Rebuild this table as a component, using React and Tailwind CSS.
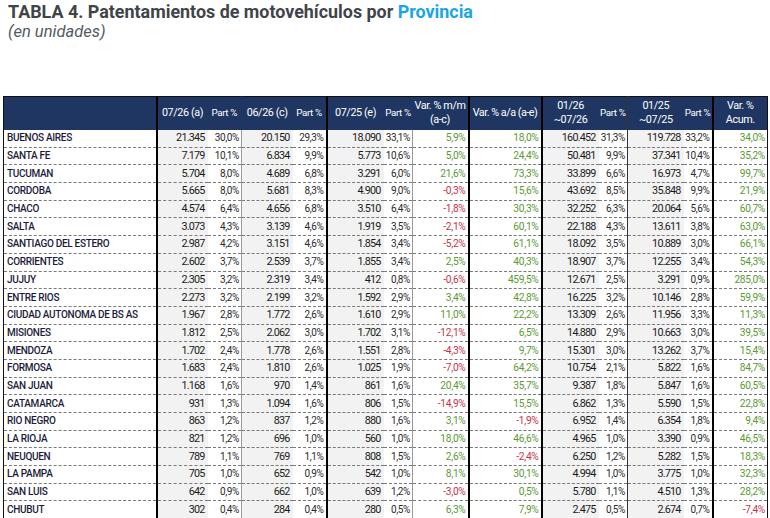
import React from 'react';

const ROWS = [
  ['BUENOS AIRES', '21.345', '30,0%', '20.150', '29,3%', '18.090', '33,1%', '5,9%', '18,0%', '160.452', '31,3%', '119.728', '33,2%', '34,0%'],
  ['SANTA FE', '7.179', '10,1%', '6.834', '9,9%', '5.773', '10,6%', '5,0%', '24,4%', '50.481', '9,9%', '37.341', '10,4%', '35,2%'],
  ['TUCUMAN', '5.704', '8,0%', '4.689', '6,8%', '3.291', '6,0%', '21,6%', '73,3%', '33.899', '6,6%', '16.973', '4,7%', '99,7%'],
  ['CORDOBA', '5.665', '8,0%', '5.681', '8,3%', '4.900', '9,0%', '-0,3%', '15,6%', '43.692', '8,5%', '35.848', '9,9%', '21,9%'],
  ['CHACO', '4.574', '6,4%', '4.656', '6,8%', '3.510', '6,4%', '-1,8%', '30,3%', '32.252', '6,3%', '20.064', '5,6%', '60,7%'],
  ['SALTA', '3.073', '4,3%', '3.139', '4,6%', '1.919', '3,5%', '-2,1%', '60,1%', '22.188', '4,3%', '13.611', '3,8%', '63,0%'],
  ['SANTIAGO DEL ESTERO', '2.987', '4,2%', '3.151', '4,6%', '1.854', '3,4%', '-5,2%', '61,1%', '18.092', '3,5%', '10.889', '3,0%', '66,1%'],
  ['CORRIENTES', '2.602', '3,7%', '2.539', '3,7%', '1.855', '3,4%', '2,5%', '40,3%', '18.907', '3,7%', '12.255', '3,4%', '54,3%'],
  ['JUJUY', '2.305', '3,2%', '2.319', '3,4%', '412', '0,8%', '-0,6%', '459,5%', '12.671', '2,5%', '3.291', '0,9%', '285,0%'],
  ['ENTRE RIOS', '2.273', '3,2%', '2.199', '3,2%', '1.592', '2,9%', '3,4%', '42,8%', '16.225', '3,2%', '10.146', '2,8%', '59,9%'],
  ['CIUDAD AUTONOMA DE BS AS', '1.967', '2,8%', '1.772', '2,6%', '1.610', '2,9%', '11,0%', '22,2%', '13.309', '2,6%', '11.956', '3,3%', '11,3%'],
  ['MISIONES', '1.812', '2,5%', '2.062', '3,0%', '1.702', '3,1%', '-12,1%', '6,5%', '14.880', '2,9%', '10.663', '3,0%', '39,5%'],
  ['MENDOZA', '1.702', '2,4%', '1.778', '2,6%', '1.551', '2,8%', '-4,3%', '9,7%', '15.301', '3,0%', '13.262', '3,7%', '15,4%'],
  ['FORMOSA', '1.683', '2,4%', '1.810', '2,6%', '1.025', '1,9%', '-7,0%', '64,2%', '10.754', '2,1%', '5.822', '1,6%', '84,7%'],
  ['SAN JUAN', '1.168', '1,6%', '970', '1,4%', '861', '1,6%', '20,4%', '35,7%', '9.387', '1,8%', '5.847', '1,6%', '60,5%'],
  ['CATAMARCA', '931', '1,3%', '1.094', '1,6%', '806', '1,5%', '-14,9%', '15,5%', '6.862', '1,3%', '5.590', '1,5%', '22,8%'],
  ['RIO NEGRO', '863', '1,2%', '837', '1,2%', '880', '1,6%', '3,1%', '-1,9%', '6.952', '1,4%', '6.354', '1,8%', '9,4%'],
  ['LA RIOJA', '821', '1,2%', '696', '1,0%', '560', '1,0%', '18,0%', '46,6%', '4.965', '1,0%', '3.390', '0,9%', '46,5%'],
  ['NEUQUEN', '789', '1,1%', '769', '1,1%', '808', '1,5%', '2,6%', '-2,4%', '6.250', '1,2%', '5.282', '1,5%', '18,3%'],
  ['LA PAMPA', '705', '1,0%', '652', '0,9%', '542', '1,0%', '8,1%', '30,1%', '4.994', '1,0%', '3.775', '1,0%', '32,3%'],
  ['SAN LUIS', '642', '0,9%', '662', '1,0%', '639', '1,2%', '-3,0%', '0,5%', '5.780', '1,1%', '4.510', '1,3%', '28,2%'],
  ['CHUBUT', '302', '0,4%', '284', '0,4%', '280', '0,5%', '6,3%', '7,9%', '2.475', '0,5%', '2.674', '0,7%', '-7,4%'],
];

const WIDTHS = [153, 51, 34, 51, 34, 57, 29, 56, 73, 57, 29, 56, 29, 55];

// right border per column: thick black group edges, thin grey inside groups
const RIGHT = [
  'border-r-2 border-r-black',
  '',
  'border-r border-r-[#9a9a9a]',
  '',
  'border-r-2 border-r-black',
  '',
  'border-r border-r-[#9a9a9a]',
  'border-r-2 border-r-black',
  'border-r-2 border-r-black',
  '',
  'border-r border-r-[#333]',
  '',
  'border-r-2 border-r-black',
  'border-r border-r-[#111]',
];

const VALUE_COLS = [1, 3, 5, 9, 11];
const PART_COLS = [2, 4, 6, 10, 12];

function Cell({ i, v }) {
  if (i === 0) {
    return (
      <td className={`pl-[3px] text-left text-[10px] font-medium tracking-[-0.3px] text-[#1c1c3a] whitespace-nowrap ${RIGHT[i]}`}>
        {v}
      </td>
    );
  }
  if (VALUE_COLS.includes(i)) {
    return (
      <td className={`bg-[#f2f2f2] pr-[3px] text-right text-[10.8px] tracking-[-0.8px] text-[#1a1a1a] ${RIGHT[i]}`}>{v}</td>
    );
  }
  if (PART_COLS.includes(i)) {
    return (
      <td className={`pr-[2px] text-right text-[10px] tracking-[-0.4px] text-[#2a2a2a] ${RIGHT[i]}`}>{v}</td>
    );
  }
  const neg = v.startsWith('-');
  return (
    <td className={`pr-[2px] text-right text-[10.2px] tracking-[-0.3px] ${neg ? 'text-[#c8334a]' : 'text-[#5a9a34]'} ${RIGHT[i]}`}>
      {v}
    </td>
  );
}

export default function App() {
  return (
    <div className="w-[770px] h-[518px] overflow-hidden bg-white" style={{ fontFamily: 'Roboto, "Liberation Sans", sans-serif' }}>
      {/* Title */}
      <div className="pl-[8px] pt-[1px]">
        <h1 className="text-[17.9px] font-bold leading-[21px] text-[#3f4449]">
          TABLA 4. Patentamientos de motovehículos por <span className="text-[#1aa6e4]">Provincia</span>
        </h1>
        <p className="text-[16.5px] italic leading-[19px] text-[#555a5f]">(en unidades)</p>
      </div>

      <div className="pl-[3px] pt-[55px]">
        <table className="table-fixed border-collapse w-[764px] border-l border-t border-[#111]">
          <colgroup>
            {WIDTHS.map((w, i) => (
              <col key={i} style={{ width: w }} />
            ))}
          </colgroup>
          <thead>
            <tr className="h-[33px] bg-[#1f3662] text-white text-[10.8px] tracking-[-0.4px] font-normal">
              <th className="border-r-2 border-r-black"></th>
              <th className="font-normal text-center whitespace-nowrap">07/26 (a)</th>
              <th className="text-[9.8px] font-normal text-center whitespace-nowrap border-r border-r-[#1f3662]">Part %</th>
              <th className="font-normal text-center whitespace-nowrap">06/26 (c)</th>
              <th className="text-[9.8px] font-normal text-center whitespace-nowrap border-r-2 border-r-black">Part %</th>
              <th className="font-normal text-center whitespace-nowrap">07/25 (e)</th>
              <th className="text-[9.8px] font-normal text-center whitespace-nowrap">Part %</th>
              <th className="font-normal text-center leading-[14px] whitespace-nowrap border-r-2 border-r-black">
                Var. % m/m
                <br />
                (a-c)
              </th>
              <th className="font-normal text-center whitespace-nowrap tracking-[-0.5px] border-r-2 border-r-black">Var. % a/a (a-e)</th>
              <th className="font-normal text-center leading-[14px]">
                01/26
                <br />
                ~07/26
              </th>
              <th className="text-[9.8px] font-normal text-center whitespace-nowrap border-r border-r-[#333]">Part %</th>
              <th className="font-normal text-center leading-[14px]">
                01/25
                <br />
                ~07/25
              </th>
              <th className="text-[9.8px] font-normal text-center whitespace-nowrap border-r-2 border-r-black">Part %</th>
              <th className="font-normal text-center leading-[14px] border-r border-r-[#111]">
                Var. %
                <br />
                Acum.
              </th>
            </tr>
          </thead>
          <tbody>
            {ROWS.map((row) => (
              <tr key={row[0]} className="h-[17.7px] leading-[16px] border-b border-dashed border-b-[#7a7a7a]">
                {row.map((v, i) => (
                  <Cell key={i} i={i} v={v} />
                ))}
              </tr>
            ))}
          </tbody>
        </table>
      </div>
    </div>
  );
}
